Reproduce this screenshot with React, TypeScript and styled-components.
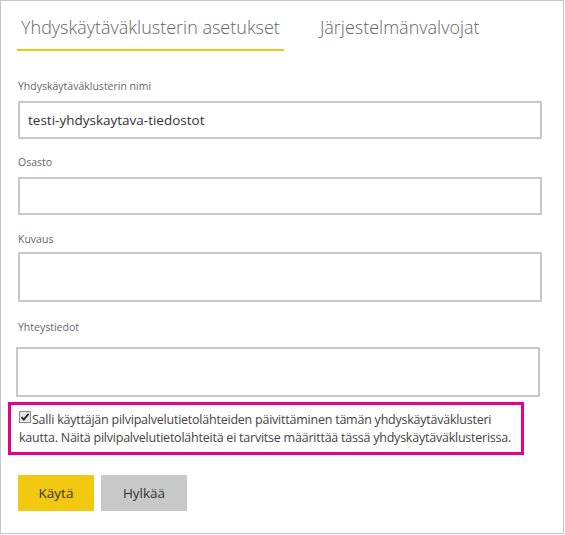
import React from "react";
import styled, { createGlobalStyle } from "styled-components";

const GlobalStyle = createGlobalStyle`
  html, body { margin: 0; padding: 0; background: #ffffff; }
  body { font-family: "Open Sans", "Noto Sans", sans-serif; }
`;

const Panel = styled.div`
  box-sizing: border-box;
  width: 564px;
  height: 534px;
  border: 1px solid #c6c6c6;
  display: flex;
  flex-direction: column;
  align-items: flex-start;
  font-family: "Open Sans", "Noto Sans", sans-serif;
`;

const TabBar = styled.div`
  display: flex;
  gap: 32px;
  margin: 13px 0 0 16px;
`;

const Tab = styled.div<{ $active?: boolean }>`
  padding: 1px 4px 9px 4px;
  font-size: 18px;
  font-weight: 300;
  line-height: 25px;
  color: #666666;
  border-bottom: 2px solid ${(p) => (p.$active ? "#f2c80f" : "transparent")};
  white-space: nowrap;
`;

const Form = styled.div`
  display: flex;
  flex-direction: column;
  margin-left: 17px;
  width: 524px;
`;

const Field = styled.div<{ $top: number }>`
  display: flex;
  flex-direction: column;
  margin-top: ${(p) => p.$top}px;
`;

const Label = styled.label<{ $gap: number }>`
  font-size: 10.5px;
  line-height: 16px;
  color: #666666;
  margin-bottom: ${(p) => p.$gap}px;
`;

const TextBox = styled.input<{ $h: number; $shift?: number }>`
  box-sizing: border-box;
  width: 524px;
  height: ${(p) => p.$h}px;
  margin: 0 0 0 ${(p) => p.$shift ?? 0}px;
  border: 2px solid #c8c8c8;
  padding: 0 8px;
  font-family: "Open Sans", "Noto Sans", sans-serif;
  font-size: 13.5px;
  color: #333333;
  background: #ffffff;
  outline: none;
  border-radius: 0;
`;

const Highlight = styled.label`
  box-sizing: border-box;
  width: 516px;
  margin: 5px 0 0 7px;
  padding: 6px 3px 5px 8px;
  border: 3px solid #e6008a;
  font-size: 12.5px;
  letter-spacing: -0.23px;
  line-height: 18px;
  color: #444444;
`;

const CheckMark = styled.span`
  display: inline-block;
  width: 12px;
  height: 12px;
  margin-right: 1px;
  vertical-align: top;
  svg { display: block; }
`;

const ButtonRow = styled.div`
  display: flex;
  gap: 7px;
  margin: 20px 0 0 17px;
`;

const Button = styled.button<{ $primary?: boolean; $w: number }>`
  width: ${(p) => p.$w}px;
  height: 36px;
  border: none;
  border-radius: 0;
  padding: 0;
  background: ${(p) => (p.$primary ? "#f2c811" : "#c8c8c8")};
  color: #333333;
  font-family: "Open Sans", "Noto Sans", sans-serif;
  font-size: 13.5px;
  cursor: pointer;
`;

export default function App() {
  return (
    <>
      <GlobalStyle />
      <Panel>
        <TabBar>
          <Tab $active>Yhdyskäytäväklusterin asetukset</Tab>
          <Tab>Järjestelmänvalvojat</Tab>
        </TabBar>
        <Form>
          <Field $top={27}>
            <Label $gap={7}>Yhdyskäytäväklusterin nimi</Label>
            <TextBox $h={38} readOnly value="testi-yhdyskaytava-tiedostot" />
          </Field>
          <Field $top={15}>
            <Label $gap={7}>Osasto</Label>
            <TextBox $h={38} readOnly value="" />
          </Field>
          <Field $top={16}>
            <Label $gap={5}>Kuvaus</Label>
            <TextBox $h={50} readOnly value="" />
          </Field>
          <Field $top={17}>
            <Label $gap={12}>Yhteystiedot</Label>
            <TextBox $h={50} $shift={-2} readOnly value="" />
          </Field>
        </Form>
        <Highlight>
          <CheckMark>
            <svg width="12" height="12" viewBox="0 0 12 12">
              <rect x="0.5" y="0.5" width="11" height="11" fill="#e6e6e6" stroke="#8a8a8a" />
              <path d="M2.5 6.2 L4.8 8.6 L9.6 2.8" fill="none" stroke="#222" strokeWidth="1.8" />
            </svg>
          </CheckMark>
          Salli käyttäjän pilvipalvelutietolähteiden päivittäminen tämän yhdyskäytäväklusteri kautta. Näitä pilvipalvelutietolähteitä ei tarvitse määrittää tässä yhdyskäytäväklusterissa.
        </Highlight>
        <ButtonRow>
          <Button $primary $w={76}>Käytä</Button>
          <Button $w={86}>Hylkää</Button>
        </ButtonRow>
      </Panel>
    </>
  );
}
